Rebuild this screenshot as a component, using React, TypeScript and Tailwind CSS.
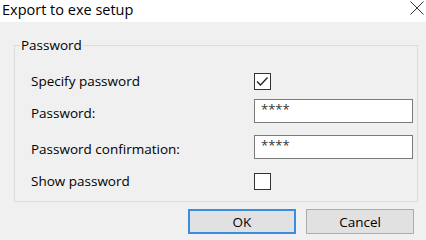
import React from 'react';

const font = { fontFamily: '"Open Sans", "Noto Sans", sans-serif' };

const CheckBox = ({ checked }: { checked: boolean }) => (
  <div className="w-[17px] h-[17px] border border-[#333333] bg-white flex items-center justify-center">
    {checked && (
      <svg width="15" height="15" viewBox="0 0 15 15">
        <polyline points="2,7.5 5.5,11 12.5,3.5" fill="none" stroke="#222" strokeWidth="1.3" />
      </svg>
    )}
  </div>
);

const PasswordInput = () => (
  <div className="w-[159px] h-[24px] border border-[#7a7a7a] bg-white pl-[6px] pt-[1px] text-[13px] leading-[16px] text-[#333]">
    ****
  </div>
);

export default function App() {
  return (
    <div className="w-[426px] h-[240px] bg-[#f0f0f0] flex flex-col text-black overflow-hidden" style={font}>
      {/* title bar */}
      <div className="h-[22px] bg-white flex items-start justify-between">
        <span className="pl-[2px] text-[14.5px] leading-[20px]">Export to exe setup</span>
        <svg width="14" height="14" viewBox="0 0 14 14" className="mt-[1px] mr-[2px]">
          <path d="M0.5 0.5 L13.5 13.5 M13.5 0.5 L0.5 13.5" stroke="#333" strokeWidth="1" />
        </svg>
      </div>

      <div className="pl-[14px] pr-[8px]">
        <fieldset className="mt-[14px] border border-[#dcdcdc] pb-[11px]">
          <legend className="ml-[5px] px-[1px] text-[13.5px] leading-[18px]">Password</legend>

          <div className="flex flex-col pl-[16px] pr-[4px] text-[13.5px]">
            <div className="mt-[19px] h-[17px] flex items-center">
              <span className="w-[223px]">Specify password</span>
              <CheckBox checked />
            </div>
            <div className="mt-[9px] h-[24px] flex items-center">
              <span className="w-[223px] pt-[5px]">Password:</span>
              <PasswordInput />
            </div>
            <div className="mt-[12px] h-[24px] flex items-center">
              <span className="w-[223px] pt-[4px]">Password confirmation:</span>
              <PasswordInput />
            </div>
            <div className="mt-[14px] h-[17px] flex items-center">
              <span className="w-[223px]">Show password</span>
              <CheckBox checked={false} />
            </div>
          </div>
        </fieldset>
      </div>

      <div className="mt-[7px] pr-[12px] flex justify-end gap-[10px] text-[13.5px]">
        <button className="w-[108px] h-[25px] border-2 border-[#3a8ee0] bg-[#e1e1e1] leading-[20px]">OK</button>
        <button className="w-[108px] h-[25px] border border-[#adadad] bg-[#e1e1e1] leading-[22px]">Cancel</button>
      </div>
    </div>
  );
}
